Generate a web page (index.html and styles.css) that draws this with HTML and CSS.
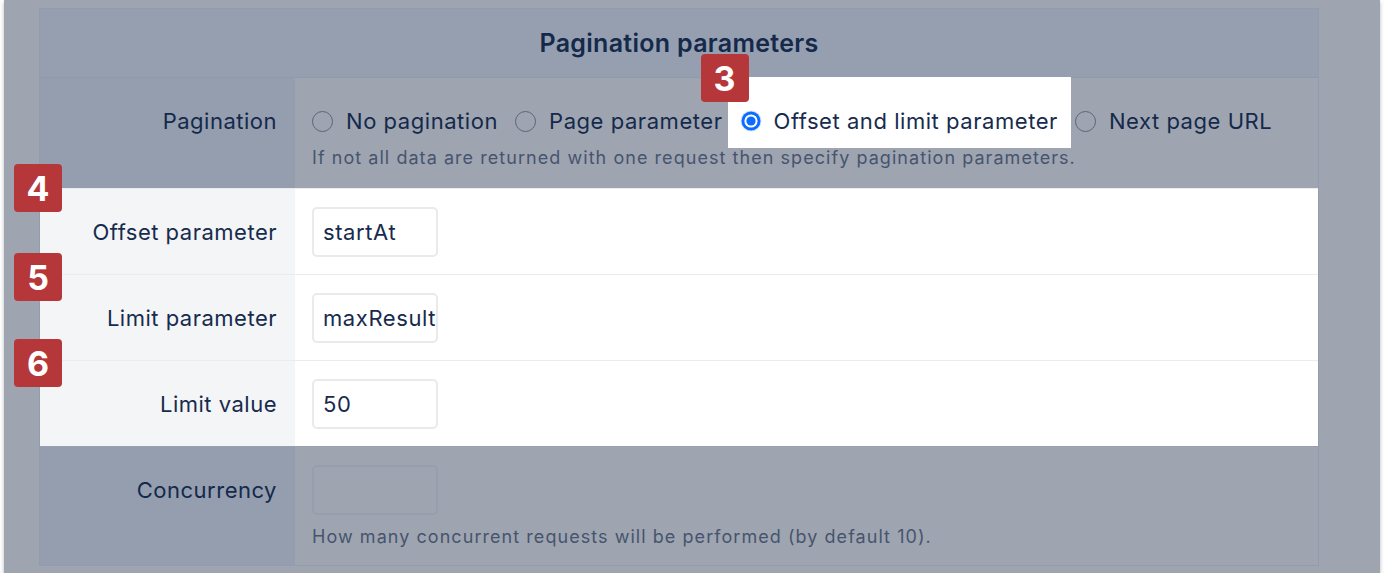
FILE: index.html
```html
<!DOCTYPE html>
<html lang="en">
<head>
<meta charset="utf-8">
<title>Pagination parameters</title>
<link rel="stylesheet" href="styles.css">
</head>
<body>
<div class="frame">
  <div class="table">
    <div class="head">Pagination parameters</div>

    <div class="row row-pag dim">
      <div class="label">Pagination</div>
      <div class="value">
        <div class="radios">
          <label class="opt"><span class="radio"></span>No pagination</label>
          <label class="opt"><span class="radio"></span>Page parameter</label>
          <label class="opt opt-hl">
            <svg class="radio-on" width="22" height="22" viewBox="0 0 22 22"><circle cx="11" cy="11" r="10.5" fill="#cfe2ff"/><circle cx="11" cy="11" r="9.5" fill="#0b6cff"/><circle cx="11" cy="11" r="6.6" fill="#ffffff"/><circle cx="11" cy="11" r="4.6" fill="#0b6cff"/></svg>Offset and limit parameter
            <span class="badge badge-3">3</span>
          </label>
          <label class="opt"><span class="radio"></span>Next page URL</label>
        </div>
        <div class="help">If not all data are returned with one request then specify pagination parameters.</div>
      </div>
    </div>

    <div class="row row-field hl">
      <span class="badge badge-row">4</span>
      <div class="label">Offset parameter</div>
      <div class="value"><div class="input">startAt</div></div>
    </div>

    <div class="row row-field hl">
      <span class="badge badge-row b-low">5</span>
      <div class="label">Limit parameter</div>
      <div class="value"><div class="input">maxResults</div></div>
    </div>

    <div class="row row-field hl">
      <span class="badge badge-row b-low">6</span>
      <div class="label">Limit value</div>
      <div class="value"><div class="input">50</div></div>
    </div>

    <div class="row row-conc dim">
      <div class="label">Concurrency</div>
      <div class="value">
        <div class="input input-dim"></div>
        <div class="help">How many concurrent requests will be performed (by default 10).</div>
      </div>
    </div>
  </div>
</div>
</body>
</html>
```

FILE: styles.css
```css
* { box-sizing: border-box; }

html, body {
  margin: 0;
  padding: 0;
  background: #ffffff;
}

body {
  font-family: Inter, "Noto Sans", "Liberation Sans", sans-serif;
  color: #172b4d;
}

.frame {
  margin-left: 4px;
  width: 1376px;
  height: 573px;
  padding: 8px 0 0 35px;
  background: #9ea4b0;
  box-shadow: 0 2px 4px rgba(0, 0, 0, 0.28);
}

.table {
  position: relative;
  width: 1280px;
  border: 1px solid #929cac;
  background: #9ea5b1;
}

.head {
  height: 69px;
  display: flex;
  align-items: center;
  justify-content: center;
  background: #959faf;
  border-bottom: 1px solid #8f99aa;
  font-size: 25px;
  font-weight: 600;
  letter-spacing: 0.3px;
  color: #15294b;
}

.row {
  position: relative;
  display: grid;
  grid-template-columns: 255px 1fr;
}

.label {
  text-align: right;
  padding-right: 18px;
  font-size: 22px;
  letter-spacing: 0.5px;
  line-height: 24px;
}

.value {
  padding-left: 17px;
}

/* dimmed rows */
.dim .label { background: #949eaf; color: #15294b; }
.dim .value { background: #9ea5b1; }

/* highlighted rows */
.hl { border-top: 1px solid #ebecf0; }
.hl .label { background: #f4f5f7; color: #172b4d; }
.hl .value { background: #ffffff; }

/* pagination row */
.row-pag .label { padding-top: 31px; }
.row-pag .value { padding-top: 31px; padding-bottom: 20px; }

.radios {
  display: flex;
  align-items: center;
  gap: 17px;
  height: 24px;
  font-size: 22px;
  letter-spacing: 0.55px;
  color: #15294b;
}

.opt {
  display: flex;
  align-items: center;
  gap: 13px;
  white-space: nowrap;
}

.radio {
  width: 21px;
  height: 21px;
  border-radius: 50%;
  border: 1.5px solid #59647a;
}

.radio-on { display: block; }

.opt-hl {
  position: relative;
  background: #ffffff;
  color: #172b4d;
  margin: -31px -13px -14px -12px;
  padding: 31px 13px 14px 12px;
  gap: 12px;
}

.help {
  margin-top: 15px;
  font-size: 18px;
  line-height: 20px;
  color: #47546d;
  letter-spacing: 1.05px;
}

/* field rows */
.row-field .label,
.row-field .value {
  padding-top: 18px;
  padding-bottom: 17px;
}

.row-field .label {
  line-height: 50px;
}

.input {
  width: 126px;
  height: 50px;
  border: 2px solid #e9eaee;
  border-radius: 5px;
  background: #ffffff;
  padding: 0 9px;
  font-size: 22px;
  letter-spacing: 0.6px;
  line-height: 46px;
  color: #172b4d;
  white-space: nowrap;
  overflow: hidden;
}

/* concurrency row */
.row-conc { border-top: 1px solid #98a1b0; }
.row-conc .label {
  padding-top: 18px;
  line-height: 50px;
}
.row-conc .value {
  padding-top: 18px;
  padding-bottom: 18px;
}
.row-conc .help { margin-top: 12px; }

.input-dim {
  background: #9ea5b1;
  border-color: #959fae;
}

/* number badges */
.badge {
  position: absolute;
  width: 48px;
  height: 48px;
  border-radius: 4px;
  background: #b5373a;
  color: #ffffff;
  font-family: Inter, "Liberation Sans", sans-serif;
  font-weight: 700;
  font-size: 34px;
  letter-spacing: 0;
  display: flex;
  align-items: center;
  justify-content: center;
  z-index: 2;
}

.badge-3 {
  left: -27px;
  top: -23px;
}

.badge-row {
  left: -26px;
  top: -25px;
}

.badge-row.b-low { top: -22px; }
```
